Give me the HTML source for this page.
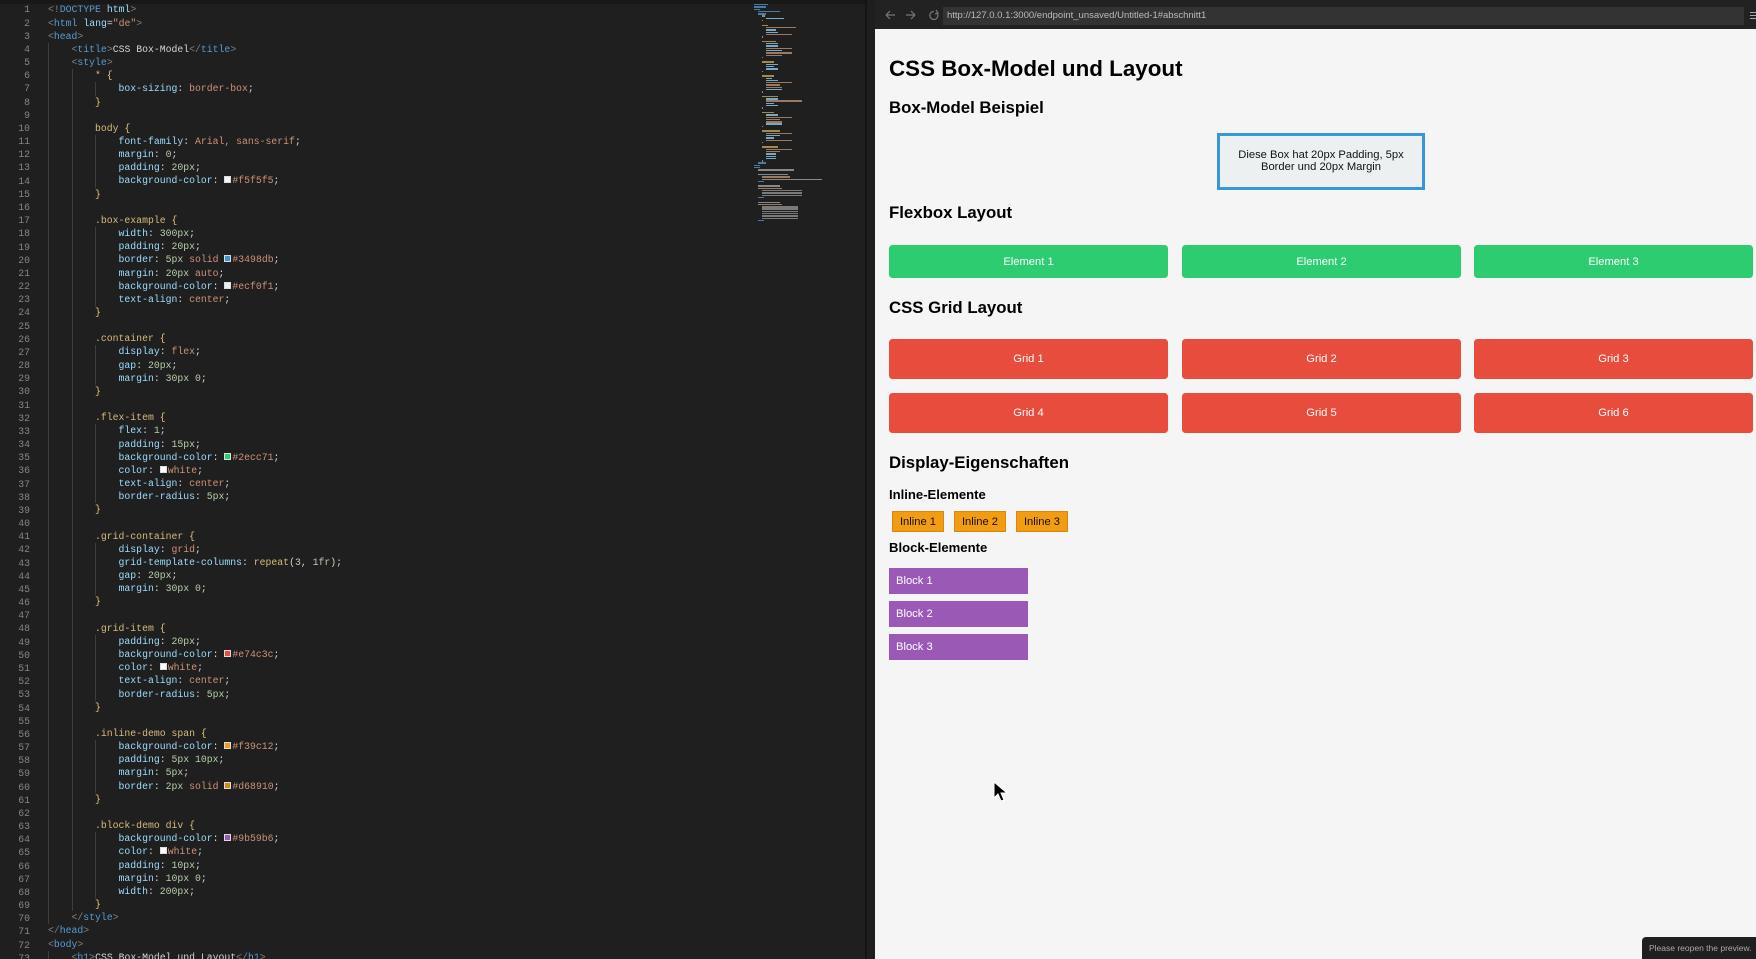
<!DOCTYPE html>
<html><head><meta charset="utf-8">
<style>
*{margin:0;padding:0;box-sizing:border-box}
body{width:1756px;height:959px;overflow:hidden;background:#1e1e1e;position:relative;font-family:"Liberation Sans",sans-serif}
#top{position:absolute;left:0;top:0;width:866px;height:4px;background:#181818}
#ed{position:absolute;left:0;top:4px;width:865px;height:955px;background:#1f1f1f;overflow:hidden}
#nums{position:absolute;left:0;top:-0.6px;width:30px;text-align:right;font:9.8px/13.17px "Liberation Mono",monospace;color:#858585;white-space:pre}
#code{position:absolute;left:48px;top:-0.6px;font:9.8px/13.17px "Liberation Mono",monospace;color:#d4d4d4}
#code div{height:13.17px;white-space:pre}
.g{display:inline-block;width:4ch;height:13.17px;vertical-align:top;border-left:1px solid #3e3e3e}
.t{color:#569cd6}.p{color:#808080}.a{color:#9cdcfe}.s{color:#ce9178}.se{color:#d7ba7d}.b{color:#e5c07b}.k{color:#9cdcfe}.v{color:#ce9178}.n{color:#b5cea8}
.sw{display:inline-block;width:7px;height:7px;border:1px solid #ddd;margin-right:1px;vertical-align:0px}
#mini{position:absolute;left:754px;top:0;width:110px;height:240px;overflow:hidden}
#mini div{height:2.3px;margin-bottom:0}
#mini i{display:inline-block;height:1.4px;vertical-align:top;margin-right:1px}
#sep{position:absolute;left:865px;top:0;width:2px;height:959px;background:#151515}
#tb{position:absolute;left:875px;top:0;width:881px;height:29px;background:#222}
#url{position:absolute;left:943px;top:7px;width:801px;height:18px;background:#333;color:#bbb;font-size:9.5px;line-height:18px;padding-left:4px}
#pv{position:absolute;left:875px;top:29px;width:881px;height:930px;background:#f5f5f5}
.h{position:absolute;left:889px;font-weight:bold;color:#000;white-space:nowrap}
.h1{font-size:22.4px;line-height:22.4px}
.h2{font-size:16.8px;line-height:16.8px}
.h3{font-size:13.1px;line-height:13.1px}
.fx,.gr{position:absolute;color:#fff;font-size:11.2px;display:flex;align-items:center;justify-content:center;border-radius:3.5px}
.fx{background:#2ecc71;height:33px;top:245px;width:279px}
.gr{background:#e74c3c;height:40px;width:279px}
.in{position:absolute;top:511px;width:52px;height:21px;background:#f39c12;border:1.4px solid #d68910;font-size:11.2px;color:#111;display:flex;align-items:center;justify-content:center}
.bl{position:absolute;left:889px;width:139px;height:26px;background:#9b59b6;color:#fff;font-size:11.2px;line-height:26px;padding-left:7px}
</style></head><body>
<div id="top"></div>
<div id="ed">
<div id="nums">1
2
3
4
5
6
7
8
9
10
11
12
13
14
15
16
17
18
19
20
21
22
23
24
25
26
27
28
29
30
31
32
33
34
35
36
37
38
39
40
41
42
43
44
45
46
47
48
49
50
51
52
53
54
55
56
57
58
59
60
61
62
63
64
65
66
67
68
69
70
71
72
73</div>
<div id="code"><div><span class="p">&lt;!</span><span class="t">DOCTYPE</span> <span class="a">html</span><span class="p">&gt;</span></div><div><span class="p">&lt;</span><span class="t">html</span> <span class="a">lang</span>=<span class="s">"de"</span><span class="p">&gt;</span></div><div><span class="p">&lt;</span><span class="t">head</span><span class="p">&gt;</span></div><div><i class="g"></i><span class="p">&lt;</span><span class="t">title</span><span class="p">&gt;</span>CSS Box-Model<span class="p">&lt;/</span><span class="t">title</span><span class="p">&gt;</span></div><div><i class="g"></i><span class="p">&lt;</span><span class="t">style</span><span class="p">&gt;</span></div><div><i class="g"></i><i class="g"></i><span class="se">* </span><span class="b">{</span></div><div><i class="g"></i><i class="g"></i><i class="g"></i><span class="k">box-sizing</span>: <span class="v">border-box</span>;</div><div><i class="g"></i><i class="g"></i><span class="b">}</span></div><div><i class="g"></i><i class="g"></i></div><div><i class="g"></i><i class="g"></i><span class="se">body </span><span class="b">{</span></div><div><i class="g"></i><i class="g"></i><i class="g"></i><span class="k">font-family</span>: <span class="v">Arial, sans-serif</span>;</div><div><i class="g"></i><i class="g"></i><i class="g"></i><span class="k">margin</span>: <span class="n">0</span>;</div><div><i class="g"></i><i class="g"></i><i class="g"></i><span class="k">padding</span>: <span class="n">20px</span>;</div><div><i class="g"></i><i class="g"></i><i class="g"></i><span class="k">background-color</span>: <i class="sw" style="background:#f5f5f5"></i><span class="v">#f5f5f5</span>;</div><div><i class="g"></i><i class="g"></i><span class="b">}</span></div><div><i class="g"></i><i class="g"></i></div><div><i class="g"></i><i class="g"></i><span class="se">.box-example </span><span class="b">{</span></div><div><i class="g"></i><i class="g"></i><i class="g"></i><span class="k">width</span>: <span class="n">300px</span>;</div><div><i class="g"></i><i class="g"></i><i class="g"></i><span class="k">padding</span>: <span class="n">20px</span>;</div><div><i class="g"></i><i class="g"></i><i class="g"></i><span class="k">border</span>: <span class="n">5px</span> <span class="v">solid</span> <i class="sw" style="background:#3498db"></i><span class="v">#3498db</span>;</div><div><i class="g"></i><i class="g"></i><i class="g"></i><span class="k">margin</span>: <span class="n">20px</span> <span class="v">auto</span>;</div><div><i class="g"></i><i class="g"></i><i class="g"></i><span class="k">background-color</span>: <i class="sw" style="background:#ecf0f1"></i><span class="v">#ecf0f1</span>;</div><div><i class="g"></i><i class="g"></i><i class="g"></i><span class="k">text-align</span>: <span class="v">center</span>;</div><div><i class="g"></i><i class="g"></i><span class="b">}</span></div><div><i class="g"></i><i class="g"></i></div><div><i class="g"></i><i class="g"></i><span class="se">.container </span><span class="b">{</span></div><div><i class="g"></i><i class="g"></i><i class="g"></i><span class="k">display</span>: <span class="v">flex</span>;</div><div><i class="g"></i><i class="g"></i><i class="g"></i><span class="k">gap</span>: <span class="n">20px</span>;</div><div><i class="g"></i><i class="g"></i><i class="g"></i><span class="k">margin</span>: <span class="n">30px 0</span>;</div><div><i class="g"></i><i class="g"></i><span class="b">}</span></div><div><i class="g"></i><i class="g"></i></div><div><i class="g"></i><i class="g"></i><span class="se">.flex-item </span><span class="b">{</span></div><div><i class="g"></i><i class="g"></i><i class="g"></i><span class="k">flex</span>: <span class="n">1</span>;</div><div><i class="g"></i><i class="g"></i><i class="g"></i><span class="k">padding</span>: <span class="n">15px</span>;</div><div><i class="g"></i><i class="g"></i><i class="g"></i><span class="k">background-color</span>: <i class="sw" style="background:#2ecc71"></i><span class="v">#2ecc71</span>;</div><div><i class="g"></i><i class="g"></i><i class="g"></i><span class="k">color</span>: <i class="sw" style="background:#fff"></i><span class="v">white</span>;</div><div><i class="g"></i><i class="g"></i><i class="g"></i><span class="k">text-align</span>: <span class="v">center</span>;</div><div><i class="g"></i><i class="g"></i><i class="g"></i><span class="k">border-radius</span>: <span class="n">5px</span>;</div><div><i class="g"></i><i class="g"></i><span class="b">}</span></div><div><i class="g"></i><i class="g"></i></div><div><i class="g"></i><i class="g"></i><span class="se">.grid-container </span><span class="b">{</span></div><div><i class="g"></i><i class="g"></i><i class="g"></i><span class="k">display</span>: <span class="v">grid</span>;</div><div><i class="g"></i><i class="g"></i><i class="g"></i><span class="k">grid-template-columns</span>: <span class="se">repeat</span>(<span class="n">3</span>, <span class="n">1fr</span>);</div><div><i class="g"></i><i class="g"></i><i class="g"></i><span class="k">gap</span>: <span class="n">20px</span>;</div><div><i class="g"></i><i class="g"></i><i class="g"></i><span class="k">margin</span>: <span class="n">30px 0</span>;</div><div><i class="g"></i><i class="g"></i><span class="b">}</span></div><div><i class="g"></i><i class="g"></i></div><div><i class="g"></i><i class="g"></i><span class="se">.grid-item </span><span class="b">{</span></div><div><i class="g"></i><i class="g"></i><i class="g"></i><span class="k">padding</span>: <span class="n">20px</span>;</div><div><i class="g"></i><i class="g"></i><i class="g"></i><span class="k">background-color</span>: <i class="sw" style="background:#e74c3c"></i><span class="v">#e74c3c</span>;</div><div><i class="g"></i><i class="g"></i><i class="g"></i><span class="k">color</span>: <i class="sw" style="background:#fff"></i><span class="v">white</span>;</div><div><i class="g"></i><i class="g"></i><i class="g"></i><span class="k">text-align</span>: <span class="v">center</span>;</div><div><i class="g"></i><i class="g"></i><i class="g"></i><span class="k">border-radius</span>: <span class="n">5px</span>;</div><div><i class="g"></i><i class="g"></i><span class="b">}</span></div><div><i class="g"></i><i class="g"></i></div><div><i class="g"></i><i class="g"></i><span class="se">.inline-demo span </span><span class="b">{</span></div><div><i class="g"></i><i class="g"></i><i class="g"></i><span class="k">background-color</span>: <i class="sw" style="background:#f39c12"></i><span class="v">#f39c12</span>;</div><div><i class="g"></i><i class="g"></i><i class="g"></i><span class="k">padding</span>: <span class="n">5px 10px</span>;</div><div><i class="g"></i><i class="g"></i><i class="g"></i><span class="k">margin</span>: <span class="n">5px</span>;</div><div><i class="g"></i><i class="g"></i><i class="g"></i><span class="k">border</span>: <span class="n">2px</span> <span class="v">solid</span> <i class="sw" style="background:#d68910"></i><span class="v">#d68910</span>;</div><div><i class="g"></i><i class="g"></i><span class="b">}</span></div><div><i class="g"></i><i class="g"></i></div><div><i class="g"></i><i class="g"></i><span class="se">.block-demo div </span><span class="b">{</span></div><div><i class="g"></i><i class="g"></i><i class="g"></i><span class="k">background-color</span>: <i class="sw" style="background:#9b59b6"></i><span class="v">#9b59b6</span>;</div><div><i class="g"></i><i class="g"></i><i class="g"></i><span class="k">color</span>: <i class="sw" style="background:#fff"></i><span class="v">white</span>;</div><div><i class="g"></i><i class="g"></i><i class="g"></i><span class="k">padding</span>: <span class="n">10px</span>;</div><div><i class="g"></i><i class="g"></i><i class="g"></i><span class="k">margin</span>: <span class="n">10px 0</span>;</div><div><i class="g"></i><i class="g"></i><i class="g"></i><span class="k">width</span>: <span class="n">200px</span>;</div><div><i class="g"></i><i class="g"></i><span class="b">}</span></div><div><i class="g"></i><span class="p">&lt;/</span><span class="t">style</span><span class="p">&gt;</span></div><div><span class="p">&lt;/</span><span class="t">head</span><span class="p">&gt;</span></div><div><span class="p">&lt;</span><span class="t">body</span><span class="p">&gt;</span></div><div><i class="g"></i><span class="p">&lt;</span><span class="t">h1</span><span class="p">&gt;</span>CSS Box-Model und Layout<span class="p">&lt;/</span><span class="t">h1</span><span class="p">&gt;</span></div></div>
<div id="mini">
<div><i style="width:14px;background:#4a7aa8"></i></div>
<div><i style="width:12px;background:#4a7aa8"></i></div>
<div><i style="width:6px;background:#4a7aa8"></i></div>
<div style="padding-left:4px"><i style="width:22px;background:#4a7aa8"></i></div>
<div style="padding-left:4px"><i style="width:8px;background:#4a7aa8"></i></div>
<div style="padding-left:8px"><i style="width:3px;background:#a08a50"></i></div>
<div style="padding-left:12px"><i style="width:18px;background:#7aa8c4"></i></div>
<div style="padding-left:8px"><i style="width:1px;background:#a08a50"></i></div>
<div></div>
<div style="padding-left:8px"><i style="width:6px;background:#a08a50"></i></div>
<div style="padding-left:12px"><i style="width:30px;background:#9a7a60"></i></div>
<div style="padding-left:12px"><i style="width:10px;background:#7aa8c4"></i></div>
<div style="padding-left:12px"><i style="width:12px;background:#7aa8c4"></i></div>
<div style="padding-left:12px"><i style="width:26px;background:#9a7a60"></i></div>
<div style="padding-left:8px"><i style="width:1px;background:#a08a50"></i></div>
<div></div>
<div style="padding-left:8px"><i style="width:14px;background:#a08a50"></i></div>
<div style="padding-left:12px"><i style="width:12px;background:#7aa8c4"></i></div>
<div style="padding-left:12px"><i style="width:12px;background:#7aa8c4"></i></div>
<div style="padding-left:12px"><i style="width:26px;background:#9a7a60"></i></div>
<div style="padding-left:12px"><i style="width:16px;background:#7aa8c4"></i></div>
<div style="padding-left:12px"><i style="width:26px;background:#9a7a60"></i></div>
<div style="padding-left:12px"><i style="width:16px;background:#9a7a60"></i></div>
<div style="padding-left:8px"><i style="width:1px;background:#a08a50"></i></div>
<div></div>
<div style="padding-left:8px"><i style="width:12px;background:#a08a50"></i></div>
<div style="padding-left:12px"><i style="width:12px;background:#7aa8c4"></i></div>
<div style="padding-left:12px"><i style="width:8px;background:#7aa8c4"></i></div>
<div style="padding-left:12px"><i style="width:12px;background:#7aa8c4"></i></div>
<div style="padding-left:8px"><i style="width:1px;background:#a08a50"></i></div>
<div></div>
<div style="padding-left:8px"><i style="width:12px;background:#a08a50"></i></div>
<div style="padding-left:12px"><i style="width:6px;background:#7aa8c4"></i></div>
<div style="padding-left:12px"><i style="width:12px;background:#7aa8c4"></i></div>
<div style="padding-left:12px"><i style="width:26px;background:#9a7a60"></i></div>
<div style="padding-left:12px"><i style="width:14px;background:#9a7a60"></i></div>
<div style="padding-left:12px"><i style="width:16px;background:#9a7a60"></i></div>
<div style="padding-left:12px"><i style="width:16px;background:#7aa8c4"></i></div>
<div style="padding-left:8px"><i style="width:1px;background:#a08a50"></i></div>
<div></div>
<div style="padding-left:8px"><i style="width:16px;background:#a08a50"></i></div>
<div style="padding-left:12px"><i style="width:12px;background:#7aa8c4"></i></div>
<div style="padding-left:12px"><i style="width:36px;background:#9a7a60"></i></div>
<div style="padding-left:12px"><i style="width:8px;background:#7aa8c4"></i></div>
<div style="padding-left:12px"><i style="width:12px;background:#7aa8c4"></i></div>
<div style="padding-left:8px"><i style="width:1px;background:#a08a50"></i></div>
<div></div>
<div style="padding-left:8px"><i style="width:12px;background:#a08a50"></i></div>
<div style="padding-left:12px"><i style="width:12px;background:#7aa8c4"></i></div>
<div style="padding-left:12px"><i style="width:26px;background:#9a7a60"></i></div>
<div style="padding-left:12px"><i style="width:14px;background:#9a7a60"></i></div>
<div style="padding-left:12px"><i style="width:16px;background:#9a7a60"></i></div>
<div style="padding-left:12px"><i style="width:16px;background:#7aa8c4"></i></div>
<div style="padding-left:8px"><i style="width:1px;background:#a08a50"></i></div>
<div></div>
<div style="padding-left:8px"><i style="width:18px;background:#a08a50"></i></div>
<div style="padding-left:12px"><i style="width:26px;background:#9a7a60"></i></div>
<div style="padding-left:12px"><i style="width:14px;background:#7aa8c4"></i></div>
<div style="padding-left:12px"><i style="width:8px;background:#7aa8c4"></i></div>
<div style="padding-left:12px"><i style="width:26px;background:#9a7a60"></i></div>
<div style="padding-left:8px"><i style="width:1px;background:#a08a50"></i></div>
<div></div>
<div style="padding-left:8px"><i style="width:16px;background:#a08a50"></i></div>
<div style="padding-left:12px"><i style="width:26px;background:#9a7a60"></i></div>
<div style="padding-left:12px"><i style="width:14px;background:#9a7a60"></i></div>
<div style="padding-left:12px"><i style="width:10px;background:#7aa8c4"></i></div>
<div style="padding-left:12px"><i style="width:10px;background:#7aa8c4"></i></div>
<div style="padding-left:12px"><i style="width:10px;background:#7aa8c4"></i></div>
<div style="padding-left:8px"><i style="width:1px;background:#a08a50"></i></div>
<div style="padding-left:4px"><i style="width:8px;background:#4a7aa8"></i></div>
<div><i style="width:6px;background:#4a7aa8"></i></div>
<div><i style="width:6px;background:#4a7aa8"></i></div>
<div style="padding-left:4px"><i style="width:36px;background:#888"></i></div>
<div></div>
<div style="padding-left:4px"><i style="width:30px;background:#888"></i></div>
<div style="padding-left:8px"><i style="width:28px;background:#9a7a60"></i></div>
<div style="padding-left:8px"><i style="width:60px;background:#888"></i></div>
<div style="padding-left:4px"><i style="width:6px;background:#4a7aa8"></i></div>
<div></div>
<div style="padding-left:4px"><i style="width:22px;background:#888"></i></div>
<div style="padding-left:4px"><i style="width:24px;background:#9a7a60"></i></div>
<div style="padding-left:8px"><i style="width:40px;background:#7a7a7a"></i></div>
<div style="padding-left:8px"><i style="width:40px;background:#7a7a7a"></i></div>
<div style="padding-left:8px"><i style="width:40px;background:#7a7a7a"></i></div>
<div style="padding-left:4px"><i style="width:6px;background:#4a7aa8"></i></div>
<div></div>
<div style="padding-left:4px"><i style="width:22px;background:#888"></i></div>
<div style="padding-left:4px"><i style="width:24px;background:#9a7a60"></i></div>
<div style="padding-left:8px"><i style="width:36px;background:#7a7a7a"></i></div>
<div style="padding-left:8px"><i style="width:36px;background:#7a7a7a"></i></div>
<div style="padding-left:8px"><i style="width:36px;background:#7a7a7a"></i></div>
<div style="padding-left:8px"><i style="width:36px;background:#7a7a7a"></i></div>
<div style="padding-left:8px"><i style="width:36px;background:#7a7a7a"></i></div>
<div style="padding-left:8px"><i style="width:36px;background:#7a7a7a"></i></div>
<div style="padding-left:4px"><i style="width:6px;background:#4a7aa8"></i></div>
</div>
</div>
<div id="sep"></div>
<div id="tb">
<svg style="position:absolute;left:10px;top:9px" width="60" height="12" viewBox="0 0 60 12" fill="none" stroke="#777" stroke-width="1.2"><path d="M1 6h9M1 6l4-4M1 6l4 4"/><path d="M21 6h9M30 6l-4-4M30 6l-4 4"/><path d="M49 2.5a4 4 0 1 0 3 1.5" /><path d="M51 1l2 3-3 1"/></svg>
</div>
<div id="url">http://127.0.0.1:3000/endpoint_unsaved/Untitled-1#abschnitt1</div>
<div style="position:absolute;left:1750px;top:12px;width:6px;height:1px;background:#aaa;box-shadow:0 3px #aaa,0 6px #aaa"></div>
<div id="pv"></div>
<div class="h h1" style="top:58px">CSS Box-Model und Layout</div>
<div class="h h2" style="top:100px">Box-Model Beispiel</div>
<div style="position:absolute;left:1217px;top:133px;width:208px;height:57px;border:3.5px solid #3498db;background:#ecf0f1;font-size:11.2px;line-height:12.4px;text-align:center;color:#111;padding-top:12.5px">Diese Box hat 20px Padding, 5px<br>Border und 20px Margin</div>
<div class="h h2" style="top:205px">Flexbox Layout</div>
<div class="fx" style="left:889px">Element 1</div>
<div class="fx" style="left:1182px">Element 2</div>
<div class="fx" style="left:1474px">Element 3</div>
<div class="h h2" style="top:300px">CSS Grid Layout</div>
<div class="gr" style="left:889px;top:339px">Grid 1</div>
<div class="gr" style="left:1182px;top:339px">Grid 2</div>
<div class="gr" style="left:1474px;top:339px">Grid 3</div>
<div class="gr" style="left:889px;top:393px">Grid 4</div>
<div class="gr" style="left:1182px;top:393px">Grid 5</div>
<div class="gr" style="left:1474px;top:393px">Grid 6</div>
<div class="h h2" style="top:455px">Display-Eigenschaften</div>
<div class="h h3" style="top:488px">Inline-Elemente</div>
<div class="in" style="left:892px">Inline 1</div>
<div class="in" style="left:954px">Inline 2</div>
<div class="in" style="left:1016px">Inline 3</div>
<div class="h h3" style="top:541px">Block-Elemente</div>
<div class="bl" style="top:568px">Block 1</div>
<div class="bl" style="top:601px">Block 2</div>
<div class="bl" style="top:634px">Block 3</div>
<svg style="position:absolute;left:993px;top:781px" width="16" height="22" viewBox="0 0 16 22"><path d="M1 1v16l4-4 3 7 3-1-3-7h6z" fill="#000" stroke="#fff" stroke-width="1"/></svg>
<div style="position:absolute;left:1642px;top:937px;width:114px;height:22px;background:#1f1f1f;border-radius:4px 0 0 0;color:#aaa;font-size:8.5px;line-height:22px;padding-left:7px">Please reopen the preview.</div>
</body></html>
